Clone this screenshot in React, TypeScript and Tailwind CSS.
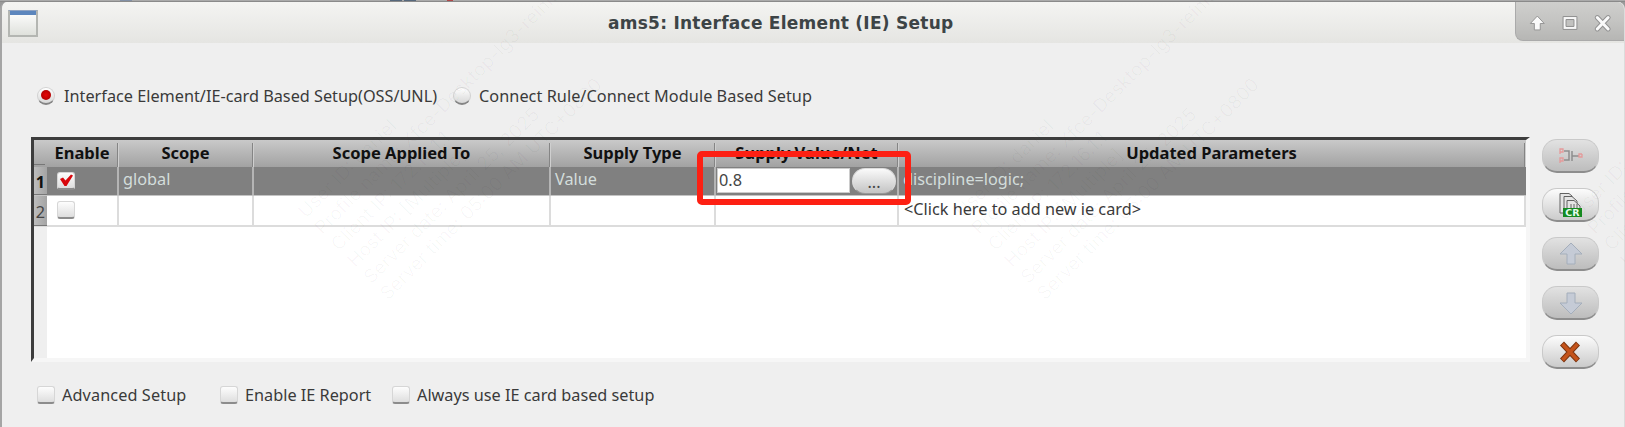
import React from "react";

const noto = "font-['Noto_Sans','Open_Sans',sans-serif]";
const cols = "grid-cols-[13px_72px_135px_297px_165px_183px_627px]";

function Check({ checked = false }: { checked?: boolean }) {
  return (
    <span className="relative block h-[18px] w-[18px] shrink-0 rounded-[3px] border border-[#d6d6d6] border-b-2 border-b-[#8c8c8c] bg-linear-to-b from-[#fdfdfd] to-[#dedede]">
      {checked && (
        <svg viewBox="0 0 16 15" className="absolute left-0 top-0 h-[15px] w-4">
          <path d="M2 6 5 4.500 7.500 7.500 13 1.500 15 2.500 8.500 13 6.500 13Z" fill="#d8060c" />
        </svg>
      )}
    </span>
  );
}

function Radio({ checked = false }: { checked?: boolean }) {
  return (
    <span className="flex h-[18px] w-[18px] shrink-0 items-center justify-center rounded-full border border-[#d2d2d2] border-b-2 border-b-[#858585] bg-linear-to-b from-white to-[#d8d8d8]">
      {checked && <span className="h-[10px] w-[10px] rounded-full bg-radial from-[#e80808] to-[#a00000]" />}
    </span>
  );
}

function SideButton({ children, disabled = false }: { children: React.ReactNode; disabled?: boolean }) {
  return (
    <button
      className={`flex h-[34px] w-[57px] items-center justify-center rounded-[15px] border border-[#c9c9c9] border-b-2 border-b-[#8d8d8d] bg-linear-to-b ${
        disabled ? "from-[#e2e2e2] to-[#bdbdbd]" : "from-[#fcfcfc] to-[#cbcbcb]"
      }`}
    >
      {children}
    </button>
  );
}

function Head({ children }: { children?: React.ReactNode }) {
  return (
    <div className="flex h-[27px] pt-[3px]">
      <div className="flex-1 whitespace-nowrap text-center text-[16.5px] font-bold leading-[20px] text-[#111]">{children}</div>
      <div className="w-[2px] border-l border-[#858585] bg-[#cfcfcf]" />
    </div>
  );
}

function RowNumber({ children, bold = false }: { children: React.ReactNode; bold?: boolean }) {
  return (
    <div
      className={`flex items-center justify-center border-b border-[#777] bg-linear-to-r from-[#bdbdbd] to-[#a4a4a4] pt-[3px] ${
        bold ? "font-bold text-[#111]" : "text-[#444]"
      }`}
    >
      {children}
    </div>
  );
}

const marks = [
  "User ID: daniel",
  "Profile name: Xfce-Desktop-lg3-reinlo",
  "Client IP: 172.16.1.1",
  "Host IP: [Multiple]",
  "Server date: April 25, 2025",
  "Server time: 05:00 AM UTC+0800",
];

function Watermark({ x, y }: { x: number; y: number }) {
  return (
    <g transform={`translate(${x} ${y}) rotate(-45)`}>
      {marks.map((m, i) => (
        <text key={m} x={0} y={i * 23.2} fontSize="18.800">
          {m}
        </text>
      ))}
    </g>
  );
}

export default function App() {
  return (
    <div className={`relative flex h-[427px] w-[1625px] flex-col overflow-hidden bg-[#999] text-[#3a3a3a] ${noto}`}>
      <div className="flex h-[2px] shrink-0 border-b border-[#8a8a8a] bg-[#aaa]">
        <span className="ml-[120px] w-[12px] bg-[#8290a6]" />
        <span className="ml-[258px] w-[12px] bg-[#56687c]" />
        <span className="ml-[2px] w-[12px] bg-[#56687c]" />
        <span className="ml-[31px] w-[6px] bg-[#b04848]" />
      </div>
      <div className="flex flex-1 flex-col overflow-hidden rounded-t-[7px] border-l-2 border-r border-l-[#a5a5a5] border-r-[#dcdcdc] bg-[#efefef]">
        <header className="flex h-[41px] shrink-0 bg-linear-to-b from-[#f4f4f2] to-[#e5e5e2]">
          <div className="ml-[6px] mt-[8px] h-[27px] w-[30px] border-2 border-[#b4b6b2] border-t border-t-[#8fa3c2] bg-linear-to-b from-white to-[#dfe1dc]">
            <div className="h-[4px] bg-[#5c86bd]" />
          </div>
          <h1 className="ml-[570px] mt-[9px] whitespace-nowrap font-['DejaVu_Sans',sans-serif] text-[17px] font-bold leading-[24px] tracking-[0.26px] text-[#3d4446]">
            ams5: Interface Element (IE) Setup
          </h1>
          <div className="ml-auto flex h-[39px] w-[109px] items-center rounded-bl-[8px] border-b border-l border-[#aaa] bg-linear-to-b from-[#cfcfcd] via-[#c4c4c2] to-[#b6b6b4]">
            <svg viewBox="0 0 109 39" className="h-[39px] w-[109px]">
              <path d="M21.500 14 28.500 21.500 24.500 21.500 24.500 28 18.500 28 18.500 21.500 14.500 21.500Z" fill="#fafafa" stroke="#949494" strokeLinejoin="round" />
              <path d="M47.500 14.500h14v13h-14Z" fill="#f8f8f8" stroke="#8f8f8f" />
              <path d="M50.500 17.500h8v7h-8Z" fill="#c2c2c0" stroke="#8f8f8f" />
              <path d="m82 15.500 11 11.500M93 15.500 82 27" stroke="#929292" strokeWidth="5" strokeLinecap="round" />
              <path d="m82 15.500 11 11.500M93 15.500 82 27" stroke="#fafafa" strokeWidth="3" strokeLinecap="round" />
            </svg>
          </div>
        </header>

        <div className="flex h-[94px] shrink-0 items-center pl-[35px] pt-[11px] text-[16.25px]">
          <Radio checked />
          <span className="ml-[9px] w-[389px] whitespace-nowrap pt-px">Interface Element/IE-card Based Setup(OSS/UNL)</span>
          <Radio />
          <span className="ml-[8px] whitespace-nowrap pt-px tracking-[0.05px]">Connect Rule/Connect Module Based Setup</span>
        </div>

        <div className="flex shrink-0 pl-[29px]">
          <div className="h-[225px] w-[1499px] border-b-4 border-l-[3px] border-r-4 border-t-[3px] border-b-[#f6f6f6] border-l-[#3d3d3d] border-r-[#f6f6f6] border-t-[#3d3d3d] bg-linear-to-r from-[#efefef] from-[13px] to-white to-[13px]">
            <div className={`grid h-[27px] ${cols} bg-linear-to-b from-[#c9c9c9] to-[#a2a2a2]`}>
              <div className="mb-[2px] mr-[2px] border-b border-[#777]" />
              <Head>Enable</Head>
              <Head>Scope</Head>
              <Head>Scope Applied To</Head>
              <Head>Supply Type</Head>
              <Head>Supply Value/Net</Head>
              <Head>Updated Parameters</Head>
            </div>
            <div className={`grid h-[29px] ${cols} border-b border-[#c4c4c4] bg-[#808080] text-[16.25px] leading-[24px] text-[#d3dddb]`}>
              <RowNumber bold>1</RowNumber>
              <div className="border-r-2 border-[#b5b5b5] pl-[10px] pt-[5px]"><Check checked /></div>
              <div className="border-r-2 border-[#b5b5b5] pl-[4px]">global</div>
              <div className="border-r-2 border-[#b5b5b5]" />
              <div className="border-r-2 border-[#b5b5b5] pl-[4px]">Value</div>
              <div className="flex border-r-2 border-[#b5b5b5] pl-[1px] pt-[1px]">
                <div className="h-[25px] w-[133px] border border-[#ccc] bg-white pl-px leading-[22px] text-[#444]">0.8</div>
                <button className="ml-[2px] h-[26px] w-[44px] rounded-[13px] border border-[#ddd] border-b-[#999] bg-linear-to-b from-[#fafafa] to-[#c4c4c4] pt-[3px] leading-[21px] text-[#444]">...</button>
              </div>
              <div className="pl-[4px]">discipline=logic;</div>
            </div>
            <div className={`grid h-[31px] ${cols} border-b-2 border-[#dcdcdc] text-[16.25px] leading-[26px]`}>
              <RowNumber>2</RowNumber>
              <div className="border-r-2 border-[#dcdcdc] pl-[10px] pt-[5px]"><Check /></div>
              <div className="border-r-2 border-[#dcdcdc]" />
              <div className="border-r-2 border-[#dcdcdc]" />
              <div className="border-r-2 border-[#dcdcdc]" />
              <div className="border-r-2 border-[#dcdcdc]" />
              <div className="border-r-2 border-[#dcdcdc] pl-[5px]">&lt;Click here to add new ie card&gt;</div>
            </div>
          </div>

          <div className="ml-[12px] mt-[2px] flex flex-col gap-[15px]">
            <SideButton disabled>
              <svg viewBox="0 0 24 16" className="h-4 w-6" fill="none">
                <path d="M5 3H10V12H5M13 3V13M13 8H20" stroke="#8e8e8e" strokeWidth="1.500" />
                <path d="M1 6V1H4V4H1M1 15V10H4V13H1M23 6H20V9H23V6" stroke="#e59a9a" strokeWidth="1.300" />
              </svg>
            </SideButton>
            <SideButton>
              <svg viewBox="0 0 24 26" className="h-[26px] w-6">
                <g fill="#e5e5e5" stroke="#626262">
                  <path d="M1 1.500H10L13 4V21H1Z" />
                  <path d="M5 4.500H13L18 9V21H5Z" />
                  <path d="M8 8.500H15L21 14V21H8ZM12 12V20M15 12V20M18 12V20" />
                </g>
                <path d="M4 16H23V25H4Z" fill="#158a20" />
                <text x="13.500" y="24" textAnchor="middle" fontSize="9.500" fontWeight="bold" fill="#e9fff0" className="font-['DejaVu_Sans',sans-serif]">CR</text>
              </svg>
            </SideButton>
            <SideButton disabled>
              <svg viewBox="0 0 24 24" className="h-6 w-6">
                <path d="M12 1 23 12H16V22H8V12H1Z" fill="#c5cbd6" stroke="#a4aebb" />
              </svg>
            </SideButton>
            <SideButton disabled>
              <svg viewBox="0 0 24 24" className="h-6 w-6">
                <path d="M12 23 23 12H16V2H8V12H1Z" fill="#c5cbd6" stroke="#a4aebb" />
              </svg>
            </SideButton>
            <SideButton>
              <svg viewBox="0 0 24 24" className="h-6 w-6">
                <path d="m3 3.500 16 17M19 3.500 3 20.500" stroke="#7c3510" strokeWidth="5.500" />
                <path d="m3.500 4 15 16M18.500 4 3.500 20" stroke="#c4531a" strokeWidth="3.500" />
              </svg>
            </SideButton>
          </div>
        </div>

        <footer className="flex items-center pl-[35px] pt-[14px] text-[16.25px]">
          <Check />
          <span className="ml-[7px] w-[158px] whitespace-nowrap tracking-[0.1px]">Advanced Setup</span>
          <Check />
          <span className="ml-[7px] w-[147px] whitespace-nowrap">Enable IE Report</span>
          <Check />
          <span className="ml-[7px] whitespace-nowrap">Always use IE card based setup</span>
        </footer>
      </div>

      <svg viewBox="0 0 1625 427" className="pointer-events-none absolute left-0 top-0 h-[427px] w-[1625px] fill-black/3 font-['Inter',sans-serif]">
        <Watermark x={306} y={219} />
        <Watermark x={963} y={219} />
        <Watermark x={1579} y={219} />
      </svg>
      <div className="absolute left-[697px] top-[151px] h-[54px] w-[214px] rounded-[5px] border-[6px] border-[#fd2013]" />
    </div>
  );
}
